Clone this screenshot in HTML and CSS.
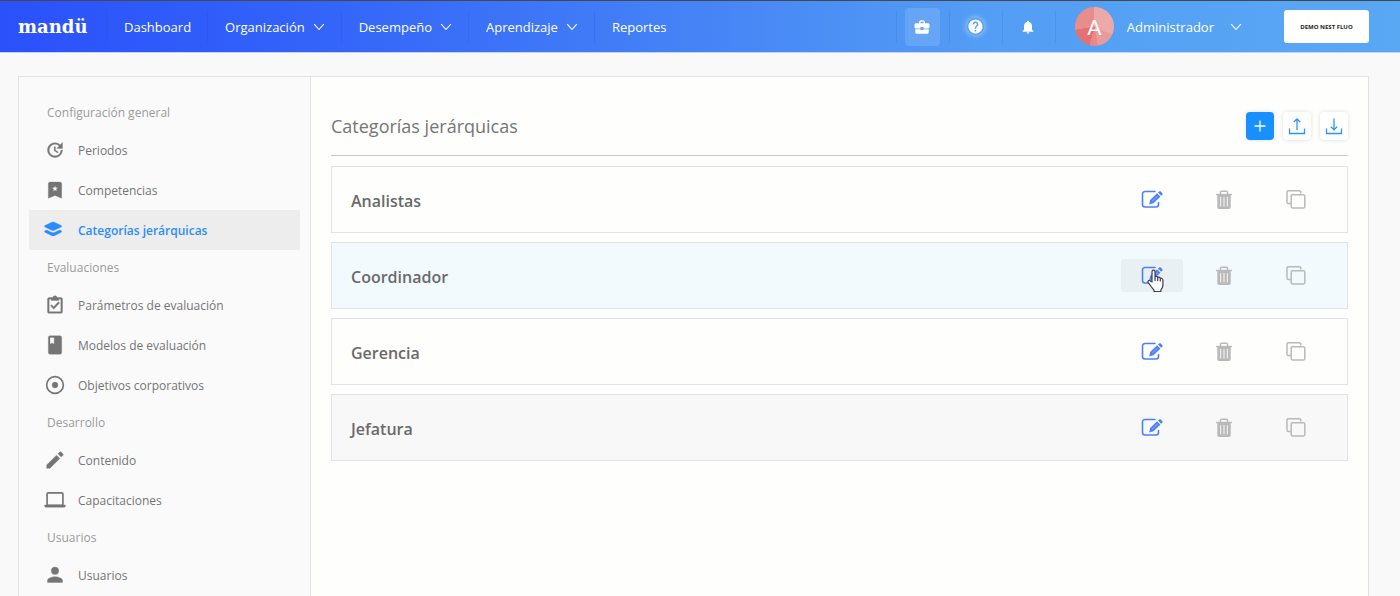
FILE: index.html
```html
<!DOCTYPE html>
<html lang="es">
<head>
<meta charset="utf-8">
<title>Categorías jerárquicas</title>
<link rel="stylesheet" href="styles.css">
</head>
<body>
<svg class="sprite" aria-hidden="true">
  <symbol id="chevron" viewBox="0 0 12 8"><path d="M1.200 1.200 6 6.500l4.800-5.300" fill="none" stroke="currentColor" stroke-width="1.100"/></symbol>
  <symbol id="edit" viewBox="0 0 22 20">
    <path d="M14 1.500H4A2.500 2.500 0 0 0 1.500 4v10.500A2.500 2.500 0 0 0 4 17h11a2.500 2.500 0 0 0 2.500-2.500v-2" fill="none" stroke="currentColor" stroke-width="1.600" stroke-linecap="round"/>
    <path d="M8.200 14.500l.9-4.600 7-6.600 3.300 3.400-7 6.600zM17 2.600l1.300-1.200q.7-.6 1.400 0l1.700 1.800q.6.700 0 1.300l-1.200 1.300z" fill="currentColor"/>
    <path d="M11 11.300l5.600-5.200M9.700 13.200l-.6-.6" stroke="#fff" stroke-opacity=".6" stroke-width=".6"/>
  </symbol>
  <symbol id="trash" viewBox="0 0 18 20">
    <path d="M1 3.800h16v1.400H1z" fill="currentColor"/>
    <path d="M5.500 4V2.200q0-.9 1-.9h5q1 0 1 .9V4" fill="none" stroke="currentColor" stroke-width="1.400"/>
    <path d="M2.300 5h13.400v12.200q0 1.800-1.800 1.800H4.100q-1.800 0-1.800-1.800z" fill="currentColor"/>
    <path d="M5.700 7v9.500M9 7v9.500M12.300 7v9.500" stroke="#f4f4f4" stroke-width="1.100"/>
  </symbol>
  <symbol id="copy" viewBox="0 0 20 20">
    <rect x="5.200" y="4.700" width="13.600" height="13.200" rx="1.300" fill="none" stroke="currentColor" stroke-width="1.500"/>
    <path d="M4.800 13.500H2.300q-1.300 0-1.300-1.300V2Q1 .8 2.300.8h11.200q1.300 0 1.300 1.200v1.500" fill="none" stroke="currentColor" stroke-width="1.500"/>
  </symbol>
</svg>

<header class="topbar">
  <a class="logo" href="#">mandü</a>
  <nav class="nav" aria-label="Principal">
    <a class="nav-item" href="#">Dashboard</a>
    <button class="nav-item" type="button">Organización<svg class="chevron"><use href="#chevron"/></svg></button>
    <button class="nav-item" type="button">Desempeño<svg class="chevron"><use href="#chevron"/></svg></button>
    <button class="nav-item" type="button">Aprendizaje<svg class="chevron"><use href="#chevron"/></svg></button>
    <a class="nav-item" href="#">Reportes</a>
  </nav>
  <div class="tools">
    <div class="tool-cell">
      <button class="tool tool-active" type="button" aria-label="Empresa">
        <svg width="18" height="18" viewBox="0 0 24 24" fill="currentColor"><path d="M10 16v-1H3.010L3 19c0 1.110.890 2 2 2h14c1.110 0 2-.890 2-2v-4h-7v1h-4zm10-9h-4.010V5l-2-2h-4l-2 2v2H4c-1.100 0-2 .9-2 2v3c0 1.110.890 2 2 2h6v-2h4v2h6c1.100 0 2-.9 2-2V9c0-1.100-.9-2-2-2zm-6 0h-4V5h4v2z"/></svg>
      </button>
    </div>
    <div class="tool-cell">
      <button class="tool tool-help" type="button" aria-label="Ayuda">
        <svg width="17" height="17" viewBox="0 0 24 24" fill="currentColor"><path d="M12 2C6.480 2 2 6.480 2 12s4.480 10 10 10 10-4.480 10-10S17.520 2 12 2zm1 17h-2v-2h2v2zm2.070-7.750l-.9.920C13.450 12.900 13 13.500 13 15h-2v-.5c0-1.100.450-2.100 1.170-2.830l1.240-1.260c.370-.360.590-.860.590-1.410 0-1.100-.9-2-2-2s-2 .9-2 2H8c0-2.210 1.790-4 4-4s4 1.790 4 4c0 .880-.360 1.680-.930 2.250z"/></svg>
      </button>
    </div>
    <div class="tool-cell">
      <button class="tool" type="button" aria-label="Notificaciones">
        <svg width="16" height="16" viewBox="0 0 24 24" fill="currentColor"><path d="M12 22c1.100 0 2-.9 2-2h-4c0 1.100.890 2 2 2zm6-6v-5c0-3.070-1.640-5.640-4.500-6.320V4c0-.830-.670-1.500-1.500-1.500s-1.500.670-1.500 1.500v.680C7.630 5.360 6 7.920 6 11v5l-2 2v1h16v-1l-2-2z"/></svg>
      </button>
    </div>
  </div>
  <button class="user" type="button">
    <span class="avatar">A</span>
    <span class="user-name">Administrador</span>
    <svg class="chevron"><use href="#chevron"/></svg>
  </button>
  <div class="company">DEMO NEST FLUO</div>
</header>

<div class="shell">
  <nav class="sidebar" aria-label="Configuración">
    <h2 class="group">Configuración general</h2>
    <a class="side-item" href="#"><svg class="side-icon" viewBox="0 0 24 24"><path d="M21 10.120h-6.780l2.740-2.820c-2.730-2.700-7.150-2.800-9.880-.1-2.730 2.710-2.730 7.080 0 9.790s7.150 2.710 9.880 0C18.320 15.650 19 14.080 19 12.100h2c0 1.980-.880 4.550-2.640 6.290-3.510 3.480-9.210 3.480-12.720 0-3.500-3.470-3.530-9.110-.020-12.580s9.140-3.470 12.650 0L21 3v7.120zM12.500 8v4.250l3.500 2.080-.720 1.210L11 13V8h1.500z"/></svg>Periodos</a>
    <a class="side-item" href="#"><svg class="side-icon" viewBox="0 0 24 24"><path fill-rule="evenodd" d="M6 2.500h12c1.100 0 2 .9 2 2V22l-8-3.500L4 22V4.500c0-1.100.9-2 2-2zm6 4.300l-1 2.300-2.500.2 1.900 1.700-.6 2.500 2.200-1.300 2.200 1.300-.6-2.500 1.900-1.700-2.500-.2z"/></svg>Competencias</a>
    <a class="side-item side-active" href="#" aria-current="page"><svg class="side-icon" viewBox="0 0 24 24"><path d="M9.700 2.300q.8 0 1.600.4l8.200 3.900q1.400.9 0 1.800l-8.200 3.900q-1.600.7-3.200 0L-.1 8.400q-1.400-.9 0-1.800l8.200-3.900q.8-.4 1.600-.4z"/><path d="M1.900 12l5.600 2.700q2.200 1 4.400 0l5.600-2.700 2 1q1.400.9 0 1.800l-8.200 4q-1.600.7-3.200 0l-8.200-4q-1.400-.9 0-1.800z"/></svg>Categorías jerárquicas</a>
    <h2 class="group">Evaluaciones</h2>
    <a class="side-item" href="#"><svg class="side-icon" viewBox="0 0 24 24"><path fill-rule="evenodd" d="M5 3h4.180C9.600 1.840 10.700 1 12 1s2.400.840 2.820 2H19c1.100 0 2 .9 2 2v15c0 1.100-.9 2-2 2H5c-1.100 0-2-.9-2-2V5c0-1.100.9-2 2-2zm0 2v15h14V5h-2.500v1.500h-9V5zM17.500 9.500l-7 7.500-4-4 1.400-1.400 2.500 2.500 5.600-6z"/></svg>Parámetros de evaluación</a>
    <a class="side-item" href="#"><svg class="side-icon" viewBox="0 0 24 24"><path fill-rule="evenodd" d="M6 1h12c1.100 0 2 .9 2 2v18c0 1.100-.9 2-2 2H6c-1.100 0-2-.9-2-2V3c0-1.100.9-2 2-2zm0 2v8l2.500-1.500L11 11V3z"/></svg>Modelos de evaluación</a>
    <a class="side-item" href="#"><svg class="side-icon" viewBox="0 0 24 24"><circle cx="12" cy="12" r="10" fill="none" stroke-width="2"/><circle cx="12" cy="12" r="3.500"/></svg>Objetivos corporativos</a>
    <h2 class="group">Desarrollo</h2>
    <a class="side-item" href="#"><svg class="side-icon" viewBox="0 0 24 24"><path d="M2 18v4h4L17.800 10.200l-4-4zM21.600 6.400c.5-.5.5-1.100 0-1.600l-2.400-2.400c-.5-.5-1.100-.5-1.600 0L15.500 4.500l4 4z"/></svg>Contenido</a>
    <a class="side-item" href="#"><svg class="side-icon" viewBox="0 0 24 24"><path d="M4 3.500h16q1.500 0 1.500 1.500v12q0 1.500-1.500 1.500H4q-1.500 0-1.500-1.500V5q0-1.500 1.500-1.500z" fill="none" stroke-width="2"/><path d="M-.5 18h25v1q0 1.800-1.800 1.800H1.300q-1.800 0-1.800-1.800z"/></svg>Capacitaciones</a>
    <h2 class="group">Usuarios</h2>
    <a class="side-item" href="#"><svg class="side-icon" viewBox="0 0 24 24"><circle cx="12" cy="7" r="4.500"/><path d="M3 21v-2.500c0-3 6-4.500 9-4.500s9 1.500 9 4.500V21z"/></svg>Usuarios</a>
  </nav>

  <main class="main">
    <div class="heading">
      <h1 class="title">Categorías jerárquicas</h1>
      <div class="heading-actions">
        <button class="square square-primary" type="button" aria-label="Agregar"><svg width="20" height="20" viewBox="0 0 20 20"><path d="M10 4.500v11M4.500 10h11"/></svg></button>
        <button class="square" type="button" aria-label="Exportar"><svg width="20" height="20" viewBox="0 0 20 20"><path d="M2.500 12.500v5h15v-5M10 14V3M6.800 6L10 2.800 13.200 6"/></svg></button>
        <button class="square" type="button" aria-label="Importar"><svg width="20" height="20" viewBox="0 0 20 20"><path d="M2.500 12.500v5h15v-5M10 2.500v11M6.800 10.600l3.200 3.200 3.200-3.200"/></svg></button>
      </div>
    </div>
    <ul class="rows">
      <li class="row">
        <span class="row-name">Analistas</span>
        <button class="action action-edit" type="button" aria-label="Editar"><svg width="22" height="20"><use href="#edit"/></svg></button>
        <button class="action" type="button" aria-label="Eliminar"><svg width="18" height="20"><use href="#trash"/></svg></button>
        <button class="action" type="button" aria-label="Duplicar"><svg width="20" height="20"><use href="#copy"/></svg></button>
      </li>
      <li class="row row-hover">
        <span class="row-name">Coordinador</span>
        <button class="action action-edit action-hover" type="button" aria-label="Editar"><svg width="22" height="20"><use href="#edit"/></svg>
          <svg class="pointer" width="18" height="24" viewBox="0 0 18 24" aria-hidden="true"><path d="M5 13V2.800q0-1.600 1.500-1.600T8 2.800V8q.4-.7 1.400-.6 1.100.1 1.300 1.200.6-.6 1.400-.4.9.2 1.100 1.200.6-.5 1.400-.2 1.300.4 1.300 1.900V16q0 2-1 3.400l-1 1.600v1.500H7v-1.300L4.500 18 1.300 13.600q-.8-1.200.2-1.900 1-.6 2.100.4zM8 8v4M10.700 8.600V12M13.300 9.300V12.500" fill="#fff" stroke="#3a3d4a" stroke-width="1.200" stroke-linejoin="round"/></svg>
        </button>
        <button class="action" type="button" aria-label="Eliminar"><svg width="18" height="20"><use href="#trash"/></svg></button>
        <button class="action" type="button" aria-label="Duplicar"><svg width="20" height="20"><use href="#copy"/></svg></button>
      </li>
      <li class="row">
        <span class="row-name">Gerencia</span>
        <button class="action action-edit" type="button" aria-label="Editar"><svg width="22" height="20"><use href="#edit"/></svg></button>
        <button class="action" type="button" aria-label="Eliminar"><svg width="18" height="20"><use href="#trash"/></svg></button>
        <button class="action" type="button" aria-label="Duplicar"><svg width="20" height="20"><use href="#copy"/></svg></button>
      </li>
      <li class="row row-muted">
        <span class="row-name">Jefatura</span>
        <button class="action action-edit" type="button" aria-label="Editar"><svg width="22" height="20"><use href="#edit"/></svg></button>
        <button class="action" type="button" aria-label="Eliminar"><svg width="18" height="20"><use href="#trash"/></svg></button>
        <button class="action" type="button" aria-label="Duplicar"><svg width="20" height="20"><use href="#copy"/></svg></button>
      </li>
    </ul>
  </main>
</div>
</body>
</html>
```
FILE: styles.css
```css
* { box-sizing: border-box; }

html { height: 100%; }

body {
  margin: 0;
  height: 100%;
  overflow: hidden;
  display: flex;
  flex-direction: column;
  background: #f9f9f9;
  color: #757575;
  font-family: "Open Sans", "Noto Sans", sans-serif;
  font-size: 12px;
}

button {
  margin: 0;
  padding: 0;
  border: 0;
  background: none;
  color: inherit;
  font: inherit;
}

a { color: inherit; text-decoration: none; }

.sprite { display: none; }

/* Top bar */
.topbar {
  display: flex;
  align-items: stretch;
  flex: none;
  height: 53px;
  padding-right: 31px;
  border-top: 1px solid #46484d;
  border-bottom: 1px solid #c3d2f5;
  background: linear-gradient(90deg, #2b51fb 0%, #3363f9 22%, #4786f6 52%, #539df4 70%, #59a8f4 100%);
  color: #fff;
}

.logo {
  display: flex;
  align-items: center;
  width: 88px;
  margin-left: 18px;
  font-family: "DejaVu Serif", serif;
  font-size: 18px;
  font-weight: 700;
}

.nav { display: flex; align-items: center; font-size: 13px; }

.nav-item {
  display: flex;
  align-items: center;
  gap: 8px;
  height: 32px;
  padding: 0 16px 0 17px;
  border-left: 1px solid rgba(30, 70, 200, .15);
}

.chevron { width: 12px; height: 8px; }

.tools {
  display: flex;
  align-items: center;
  margin-left: auto;
}

.tool-cell {
  display: flex;
  align-items: center;
  height: 32px;
  padding: 0 9px 0 8px;
  border-left: 1px solid rgba(30, 90, 200, .15);
}

.tool-cell:last-child { border-right: 1px solid rgba(30, 90, 200, .15); }

.tool {
  display: grid;
  place-items: center;
  width: 35px;
  height: 38px;
  border-radius: 4px;
}

.tool-active { background: rgba(255, 255, 255, .13); }

.tool-help svg { border-radius: 50%; box-shadow: 0 0 6px rgba(255, 255, 255, .6); }

.user {
  display: flex;
  align-items: center;
  margin-left: 19px;
  font-size: 13px;
}

.avatar {
  display: grid;
  place-items: center;
  width: 39px;
  height: 39px;
  margin-right: 13px;
  border-radius: 50%;
  background: conic-gradient(from 0deg, #eba9a8 0 115deg, #e99a9a 0 170deg, #e88a89 0 195deg, #e37171 0 260deg, #e78e8d 0);
  font-family: Lato, sans-serif;
  font-size: 21px;
}

.user-name { margin-right: 16px; }

.company {
  align-self: center;
  display: grid;
  place-items: center;
  width: 85px;
  height: 33px;
  margin-left: 42px;
  border-radius: 3px;
  background: #fff;
  color: #222;
  font-size: 6px;
  font-weight: 700;
}

/* Page */
.shell {
  flex: 1;
  display: flex;
  margin: 23px 31px 0 18px;
  border: 1px solid #e2e2e6;
  border-bottom: 0;
  background: #fefefd;
}

.sidebar {
  flex: none;
  width: 292px;
  padding: 18px 10px 0;
  border-right: 1px solid #e6e6ea;
  background: #fafafa;
}

.group {
  display: flex;
  align-items: center;
  height: 35px;
  margin: 0;
  padding-left: 18px;
  color: #9b9b9b;
  font-size: 12px;
  font-weight: 400;
}

.side-item {
  display: flex;
  align-items: center;
  gap: 13px;
  height: 40px;
  padding-left: 16px;
}

.side-icon {
  width: 20px;
  height: 20px;
  overflow: visible;
  fill: currentColor;
  stroke: currentColor;
  stroke-width: .4;
}

.side-active {
  background: #ededed;
  color: #2b8cff;
  font-weight: 600;
}

.main { flex: 1; padding: 22px 20px; }

.heading {
  display: flex;
  align-items: center;
  justify-content: space-between;
  height: 57px;
  padding-bottom: 2px;
  border-bottom: 1px solid #c9c9c9;
}

.title {
  margin: 0;
  font-size: 18px;
  font-weight: 400;
}

.heading-actions { display: flex; gap: 9px; }

.square {
  display: grid;
  place-items: center;
  width: 28px;
  height: 28px;
  border-radius: 4px;
  background: #fff;
  box-shadow: 0 0 4px rgba(0, 0, 0, .13);
  color: #2b94f5;
}

.square path { fill: none; stroke: currentColor; stroke-width: 1.300; }

.square-primary { background: #1890ff; color: #fff; }

.rows {
  display: grid;
  gap: 9px;
  margin: 10px 0 0;
  padding: 0;
  list-style: none;
}

.row {
  display: flex;
  align-items: center;
  gap: 10px;
  height: 67px;
  padding: 0 20px 0 19px;
  border: 1px solid #e2e3e8;
}

.row-hover { background: #f2fafd; }

.row-muted { background: #f8f8f8; }

.row-name {
  flex: 1;
  padding-top: 3px;
  color: #6a6a6a;
  font-size: 16px;
  font-weight: 600;
}

.action {
  position: relative;
  display: grid;
  place-items: center;
  width: 62px;
  height: 33px;
  border-radius: 3px;
  color: #b9b9b9;
}

.action-edit { color: #4c80f8; }

.action-hover { background: #e9f0f3; }

.pointer {
  position: absolute;
  left: 26px;
  top: 10px;
}
```
